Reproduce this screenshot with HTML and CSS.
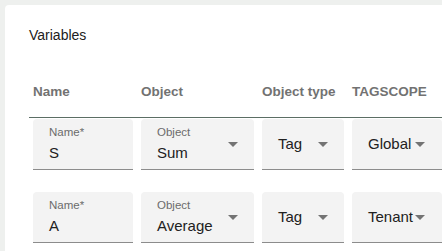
FILE: index.html
```html
<!DOCTYPE html>
<html lang="en">
<head>
  <meta charset="UTF-8" />
  <meta name="viewport" content="width=device-width, initial-scale=1.0" />
  <title>Variables</title>
  <link rel="stylesheet" href="styles.css">
</head>
<body>
  <div class="card">
    <h2 class="title">Variables</h2>
    <div class="vars">
      <div class="head">Name</div>
      <div class="head">Object</div>
      <div class="head">Object type</div>
      <div class="head">TAGSCOPE</div>

      <div class="cell">
        <div class="field">
          <div class="field-body">
            <span class="label">Name*</span>
            <span class="value">S</span>
          </div>
        </div>
      </div>
      <div class="cell">
        <div class="field">
          <div class="field-body">
            <span class="label">Object</span>
            <span class="value">Sum</span>
          </div>
          <span class="caret"></span>
        </div>
      </div>
      <div class="cell">
        <div class="field">
          <div class="field-body"><span class="value">Tag</span></div>
          <span class="caret"></span>
        </div>
      </div>
      <div class="cell last">
        <div class="field scope">
          <div class="field-body"><span class="value">Global</span></div>
          <span class="caret"></span>
        </div>
      </div>

      <div class="cell">
        <div class="field">
          <div class="field-body">
            <span class="label">Name*</span>
            <span class="value">A</span>
          </div>
        </div>
      </div>
      <div class="cell">
        <div class="field">
          <div class="field-body">
            <span class="label">Object</span>
            <span class="value">Average</span>
          </div>
          <span class="caret"></span>
        </div>
      </div>
      <div class="cell">
        <div class="field">
          <div class="field-body"><span class="value">Tag</span></div>
          <span class="caret"></span>
        </div>
      </div>
      <div class="cell last">
        <div class="field scope">
          <div class="field-body"><span class="value">Tenant</span></div>
          <span class="caret"></span>
        </div>
      </div>
    </div>
  </div>
</body>
</html>
```

FILE: styles.css
```css
html, body {
  margin: 0;
  height: 100%;
  overflow: hidden;
}
body {
  font-family: "Liberation Sans", Arial, sans-serif;
  background: #eef0ee;
  color: #212121;
  padding: 5px 0 0 5px;
  box-sizing: border-box;
}
.card {
  background: #fff;
  border-radius: 4px 0 0 0;
  height: 100%;
  padding: 22px 0 0 24px;
  box-sizing: border-box;
}
.title {
  margin: 0;
  font-size: 14px;
  line-height: 16px;
  font-weight: normal;
  color: #212121;
}
.vars {
  display: grid;
  grid-template-columns: 108px 121px 90px 1fr;
  margin-top: 41px;
}
.head {
  font-size: 13.5px;
  line-height: 16px;
  font-weight: bold;
  color: #727272;
  padding: 0 4px 17px;
  border-bottom: 1px solid #5b6e64;
  white-space: nowrap;
}
.cell {
  padding: 1px 4px 21px;
}
.vars > .cell:nth-last-child(-n+4) {
  padding-bottom: 0;
}
.cell.last {
  padding-right: 0;
}
.field {
  display: flex;
  align-items: center;
  background: #f3f3f3;
  border-radius: 4px 4px 0 0;
  border-bottom: 1px solid #8c8c8c;
  height: 50px;
  padding: 0 16px;
}
.field-body {
  flex: 1;
  display: flex;
  flex-direction: column;
  white-space: nowrap;
}
.label {
  font-size: 11.5px;
  line-height: 13px;
  color: #6b6b6b;
  margin-bottom: 5px;
}
.value {
  font-size: 15px;
  line-height: 18px;
  color: #212121;
}
.caret {
  width: 0;
  height: 0;
  border-left: 5px solid transparent;
  border-right: 5px solid transparent;
  border-top: 5px solid #737373;
  margin-left: 4px;
}
.scope .field-body {
  flex: none;
  width: 47px;
}
.scope .caret {
  margin-left: 0;
}
```
